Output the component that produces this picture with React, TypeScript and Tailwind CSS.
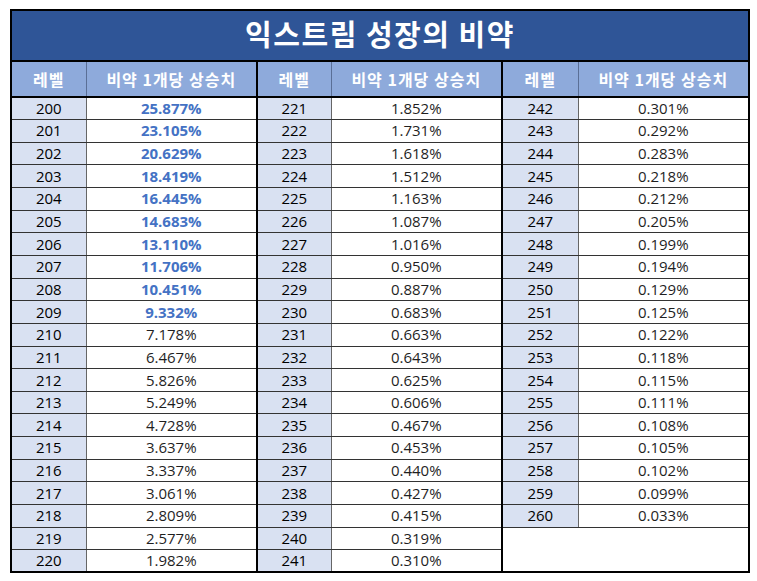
import React from 'react'

type Cell = { level: number; value: string }

const GROUP_A: Cell[] = [
  ['200', '25.877'], ['201', '23.105'], ['202', '20.629'], ['203', '18.419'], ['204', '16.445'],
  ['205', '14.683'], ['206', '13.110'], ['207', '11.706'], ['208', '10.451'], ['209', '9.332'],
  ['210', '7.178'], ['211', '6.467'], ['212', '5.826'], ['213', '5.249'], ['214', '4.728'],
  ['215', '3.637'], ['216', '3.337'], ['217', '3.061'], ['218', '2.809'], ['219', '2.577'],
  ['220', '1.982'],
].map(([l, v]) => ({ level: Number(l), value: v }))

const GROUP_B: Cell[] = [
  '1.852', '1.731', '1.618', '1.512', '1.163', '1.087', '1.016', '0.950', '0.887', '0.683',
  '0.663', '0.643', '0.625', '0.606', '0.467', '0.453', '0.440', '0.427', '0.415', '0.319', '0.310',
].map((v, i) => ({ level: 221 + i, value: v }))

const GROUP_C: Cell[] = [
  '0.301', '0.292', '0.283', '0.218', '0.212', '0.205', '0.199', '0.194', '0.129', '0.125',
  '0.122', '0.118', '0.115', '0.111', '0.108', '0.105', '0.102', '0.099', '0.033',
].map((v, i) => ({ level: 242 + i, value: v }))

const levelCell = 'bg-[#d9e1f2] border-b border-[#333] border-r border-r-[#666] text-center'
const valueCell = 'bg-white border-b border-[#333] text-center'
const groupEdge = 'border-r-2 border-r-black'

function ValueText({ level, value }: Cell) {
  // 200~209 rows are highlighted in bold blue
  const strong = level <= 209
  return <span className={strong ? 'font-bold text-[#4472c4]' : 'text-[#1f1f1f]'}>{value}%</span>
}

export default function App() {
  const rows = GROUP_A.map((a, i) => ({ a, b: GROUP_B[i], c: GROUP_C[i] }))

  return (
    <div className="bg-white w-[757px] h-[581px] pt-[9px] pl-[10px]">
      <table
        className="table-fixed border-collapse border-2 border-black w-[738px] text-[15px] leading-none"
        style={{ fontFamily: '"Open Sans", "Noto Sans CJK KR", sans-serif' }}
      >
        <colgroup>
          <col className="w-[75px]" />
          <col className="w-[171px]" />
          <col className="w-[74px]" />
          <col className="w-[171px]" />
          <col className="w-[76px]" />
          <col className="w-[171px]" />
        </colgroup>
        <thead>
          <tr className="h-[51px]">
            <th
              colSpan={6}
              className="bg-[#2f5597] text-white font-bold text-[29px] tracking-[1.5px] border-b-2 border-black pb-[5px]"
              style={{ fontFamily: '"Noto Sans CJK KR", sans-serif' }}
            >
              익스트림 성장의 비약
            </th>
          </tr>
          <tr className="h-[36px] bg-[#8eaadb] text-white font-bold text-[16px] tracking-[1px]" style={{ fontFamily: '"Noto Sans CJK KR", sans-serif' }}>
            {[0, 1, 2].map((g) => (
              <React.Fragment key={g}>
                <th className="border-b-2 border-b-black border-r border-r-[#5a6f96] font-bold">레벨</th>
                <th className={`border-b-2 border-b-black font-bold ${g < 2 ? groupEdge : ''}`}>비약 1개당 상승치</th>
              </React.Fragment>
            ))}
          </tr>
        </thead>
        <tbody>
          {rows.map(({ a, b, c }, i) => (
            <tr key={a.level} className="h-[22.65px]">
              <td className={levelCell}>{a.level}</td>
              <td className={`${valueCell} ${groupEdge}`}>
                <ValueText {...a} />
              </td>
              <td className={levelCell}>{b.level}</td>
              <td className={`${valueCell} ${groupEdge}`}>
                <ValueText {...b} />
              </td>
              {c ? (
                <>
                  <td className={levelCell}>{c.level}</td>
                  <td className={valueCell}>
                    <ValueText {...c} />
                  </td>
                </>
              ) : i === GROUP_C.length ? (
                <td colSpan={2} rowSpan={2} className="bg-white" />
              ) : null}
            </tr>
          ))}
        </tbody>
      </table>
    </div>
  )
}
